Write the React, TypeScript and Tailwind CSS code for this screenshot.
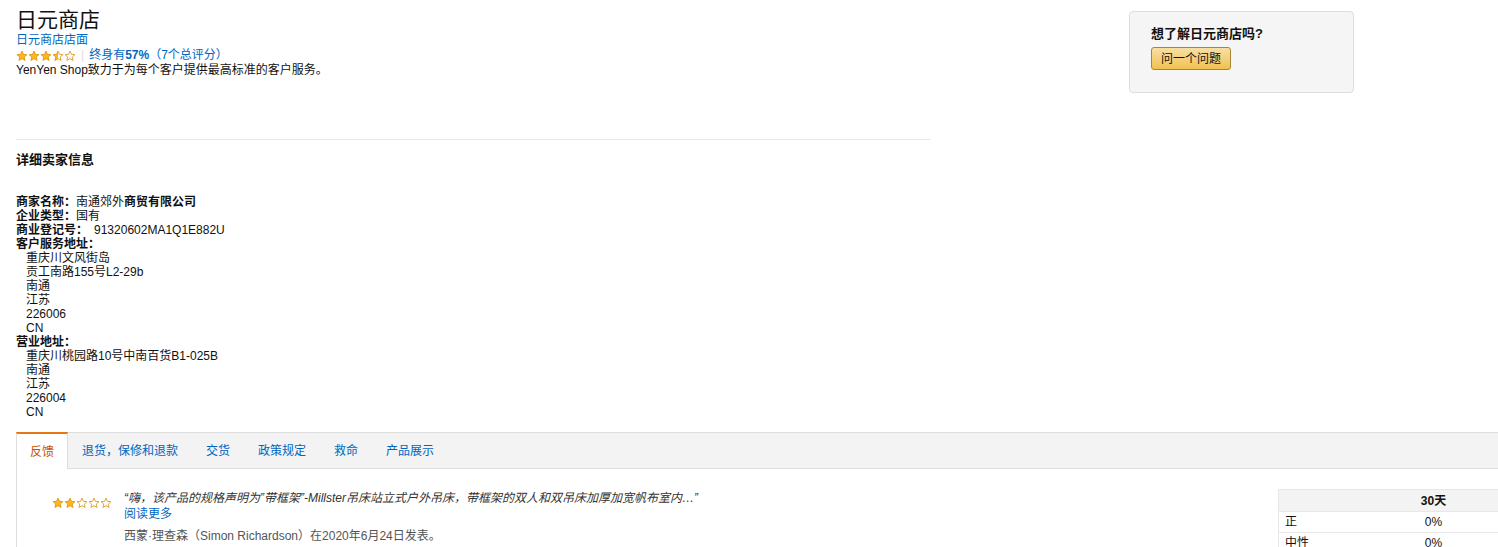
import React from "react";

const font = "font-['Liberation_Sans','Noto_Sans_CJK_SC',sans-serif]";

const STAR = "M12 2.2l2.85 6.45 7.05.65-5.35 4.7 1.6 6.9L12 17.3l-6.15 3.6 1.6-6.9-5.35-4.7 7.05-.65z";

function Stars({ value, id }: { value: number; id: string }) {
  return (
    <div className="flex items-center">
      {[0, 1, 2, 3, 4].map((i) => {
        const fill = Math.max(0, Math.min(1, value - i));
        const gid = `${id}-${i}`;
        return (
          <svg key={i} width="12" height="12" viewBox="0 0 24 24" className="block">
            <defs>
              <linearGradient id={gid} x1="0" x2="1" y1="0" y2="0">
                <stop offset={`${fill * 100}%`} stopColor="#fdb61d" />
                <stop offset={`${fill * 100}%`} stopColor="#ffffff" />
              </linearGradient>
            </defs>
            <path d={STAR} fill={`url(#${gid})`} stroke="#d9910b" strokeWidth="1.6" strokeLinejoin="round" />
          </svg>
        );
      })}
    </div>
  );
}

const tabs = ["反馈", "退货，保修和退款", "交货", "政策规定", "救命", "产品展示"];

const serviceAddress = ["重庆川文风街岛", "贡工南路155号L2-29b", "南通", "江苏", "226006", "CN"];
const businessAddress = ["重庆川桃园路10号中南百货B1-025B", "南通", "江苏", "226004", "CN"];

export default function App() {
  return (
    <div className={`h-screen overflow-hidden bg-white text-[#111] ${font}`}>
      <div className="w-[1800px] pl-4 pt-[6px]">
        {/* top area */}
        <div className="flex">
          <div className="w-[914px]">
            <h1 className="text-[21px] leading-[27px] font-normal">日元商店</h1>
            <div className="text-[12px] leading-[15px]">
              <a className="block text-[#0066c0]">日元商店店面</a>
              <div className="flex items-center">
                <Stars value={3.5} id="top" />
                <span className="mx-[5px] text-[#ddd]">|</span>
                <a className="text-[#0066c0]">
                  终身有<span className="font-bold">57%</span>（7个总评分）
                </a>
              </div>
              <p>YenYen Shop致力于为每个客户提供最高标准的客户服务。</p>
            </div>
            <div className="mt-[61px] border-t border-[#e7e7e7]" />
            <h3 className="mt-[12px] text-[13px] leading-[16px] font-bold">详细卖家信息</h3>
            <div className="mt-[27px] text-[12px] leading-[14px]">
              <div>
                <span className="font-bold">商家名称：</span>南通郊外<span className="font-bold">商贸有限公司</span>
              </div>
              <div>
                <span className="font-bold">企业类型：</span>国有
              </div>
              <div>
                <span className="font-bold">商业登记号：</span>
                <span className="ml-[6px]">91320602MA1Q1E882U</span>
              </div>
              <div className="font-bold">客户服务地址：</div>
              <div className="pl-[10px]">
                {serviceAddress.map((l) => (
                  <div key={l}>{l}</div>
                ))}
              </div>
              <div className="font-bold">营业地址：</div>
              <div className="pl-[10px]">
                {businessAddress.map((l) => (
                  <div key={l}>{l}</div>
                ))}
              </div>
            </div>
          </div>
          <div className="ml-[199px] mt-[5px]">
            <div className="w-[225px] h-[82px] rounded-[4px] border border-[#ddd] bg-[#f5f5f5] px-[21px] pt-[14px]">
              <div className="text-[13px] leading-[16px] font-bold">想了解日元商店吗?</div>
              <button className="mt-[5px] h-[23px] rounded-[3px] border border-[#a88734] bg-gradient-to-b from-[#f7dfa5] to-[#f0c14b] px-[9px] text-[12px] leading-[20px] text-[#111]">
                问一个问题
              </button>
            </div>
          </div>
        </div>

        {/* tabs */}
        <div className="mt-[13px] flex h-[37px] border-y border-[#ddd] bg-[#f3f3f3] text-[12px]">
          {tabs.map((t, i) =>
            i === 0 ? (
              <div
                key={t}
                className="-mt-px -mb-px flex items-center border-x border-t-2 border-x-[#ddd] border-t-[#e47911] bg-white px-[13px] text-[#c45500]"
              >
                {t}
              </div>
            ) : (
              <div key={t} className="flex items-center px-[14px] text-[#0066c0]">
                {t}
              </div>
            )
          )}
        </div>

        {/* feedback content */}
        <div className="flex border-l border-[#ddd]">
          <div className="w-[1261px] pt-[21px]">
            <div className="flex">
              <div className="w-[107px] pl-[35px] pt-[7px]">
                <Stars value={2} id="rev" />
              </div>
              <div className="text-[12px] leading-[16px]">
                <p className="italic text-[#333]">
                  “嗨，该产品的规格声明为”带框架”-Millster吊床站立式户外吊床，带框架的双人和双吊床加厚加宽帆布室内…”
                </p>
                <a className="block text-[#0066c0]">阅读更多</a>
                <p className="mt-[6px] text-[#555]">西蒙·理查森（Simon Richardson）在2020年6月24日发表。</p>
              </div>
            </div>
          </div>
          <div className="pt-[20px]">
            <table className="w-[400px] border-collapse text-[12px] leading-[14px]">
              <thead>
                <tr className="bg-[#f3f3f3]">
                  <th className="h-[22px] w-[110px] border-y border-l border-[#e7e7e7]"></th>
                  <th className="w-[90px] border-y border-[#e7e7e7] font-bold">30天</th>
                  <th className="border-y border-[#e7e7e7]"></th>
                </tr>
              </thead>
              <tbody>
                {["正", "中性", "负"].map((r) => (
                  <tr key={r}>
                    <td className="h-[21px] border-y border-l border-[#e7e7e7] pl-[6px]">{r}</td>
                    <td className="border-y border-[#e7e7e7] text-center">0%</td>
                    <td className="border-y border-[#e7e7e7]"></td>
                  </tr>
                ))}
              </tbody>
            </table>
          </div>
        </div>
      </div>
    </div>
  );
}
